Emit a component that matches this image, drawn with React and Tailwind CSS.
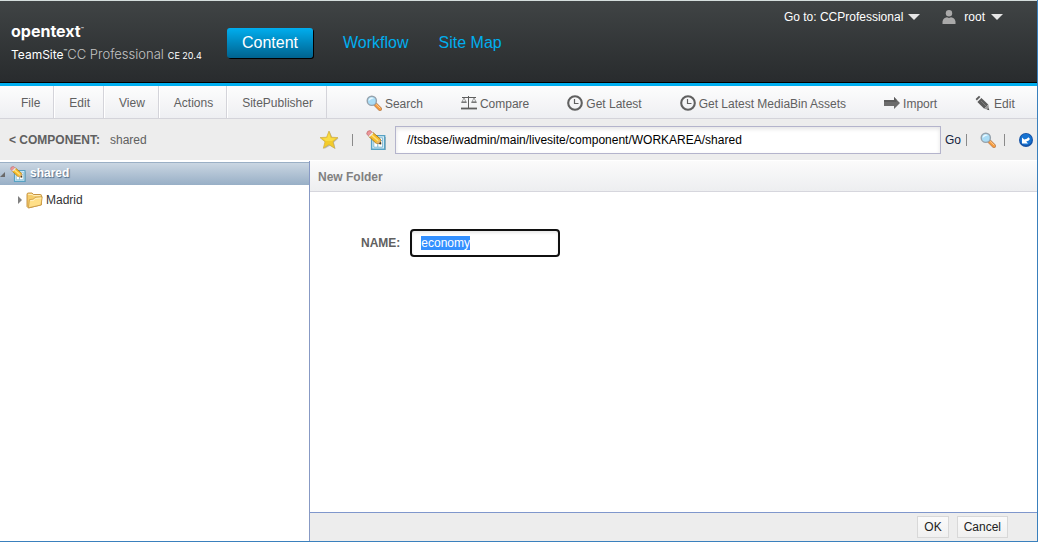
import { useEffect, useRef } from "react";

function MagnifierIcon() {
  return (
    <svg width="16" height="16" viewBox="0 0 16 16" aria-hidden="true">
      <path d="M9 9 14 14" stroke="#b98a63" strokeWidth="4" strokeLinecap="round" />
      <path d="M9.5 9.5 14 14" stroke="#f79a3c" strokeWidth="2.6" strokeLinecap="round" />
      <path d="M10.4 9.6 14 13" stroke="#ffd49a" strokeWidth="0.9" strokeLinecap="round" />
      <circle cx="5.8" cy="5.8" r="4.6" fill="#a9dcf6" stroke="#96a2ac" strokeWidth="1.4" />
      <path d="M2.6 6A3.3 3.3 0 0 1 8 3.2Q5 4 2.6 6Z" fill="#e8f8ff" />
    </svg>
  );
}

function ScalesIcon() {
  return (
    <svg width="16" height="16" viewBox="0 0 16 16" fill="none" stroke="#5f5f5f" aria-hidden="true">
      <path d="M1 2.5H15M7.5 1V13" strokeWidth="1" />
      <path d="M0 13.5H16" strokeWidth="1.8" />
      <path d="M3 3 1 6.8H5ZM13 3 11 6.8H15Z" strokeWidth="0.6" />
      <path d="M0.3 7.3H5.7M10.3 7.3H15.7" strokeWidth="1" />
    </svg>
  );
}

function ClockIcon() {
  return (
    <svg width="16" height="16" viewBox="0 0 16 16" fill="none" stroke="#606060" aria-hidden="true">
      <circle cx="8" cy="8" r="6.8" strokeWidth="2.1" />
      <path d="M7.5 4V8.5H11.5" strokeWidth="1.2" />
    </svg>
  );
}

function ArrowIcon() {
  return (
    <svg width="16" height="16" viewBox="0 0 16 16" aria-hidden="true">
      <path d="M0 5H10V2L16 8 10 14V11H0Z" fill="#6c6c6c" />
      <path d="M0 5H10V2L12.5 4.5V7H0Z" fill="#5c5c5c" />
    </svg>
  );
}

function PencilIcon() {
  return (
    <svg width="16" height="16" viewBox="0 0 16 16" aria-hidden="true">
      <path d="M4.4 5 11.2 11.6" stroke="#5c5c5c" strokeWidth="5.8" />
      <path d="M0.6 4 4 0.8 5.4 2 1.8 5.6Z" fill="#5c5c5c" />
      <path d="M13.4 9.6 9.2 13.8 14.2 15Z" fill="#989898" />
      <path d="M13.4 13.2 12 14.5 14.4 15.2Z" fill="#444" />
      <path d="M2.1 6.3 5.8 2.6" stroke="#d8d8d8" strokeWidth="0.6" />
      <path d="M6 6 11.6 11.6" stroke="#868686" strokeWidth="0.8" />
    </svg>
  );
}

function UserIcon() {
  return (
    <svg width="14" height="14" viewBox="0 0 14 14" fill="#a9a9a9" aria-hidden="true">
      <circle cx="7" cy="3.2" r="3.2" />
      <path d="M0.5 14V11.5Q1.3 7.6 5 7.2L7 8 9 7.2Q12.7 7.6 13.5 11.5V14Z" />
    </svg>
  );
}

function CaretIcon() {
  return (
    <svg width="12" height="6" viewBox="0 0 12 6" fill="#e6e6e6" aria-hidden="true">
      <path d="M0 0H12L6 6Z" />
    </svg>
  );
}

function StarIcon() {
  return (
    <svg width="20" height="20" viewBox="0 0 20 20" aria-hidden="true">
      <path d="M10.8 1.8 13.3 7.6 19.6 8.2 14.9 12.4 16.6 19 11 15.7 5.2 19 6.8 12.4 2 8.2 8.2 7.6Z" fill="#b9bcc0" />
      <path d="M10 1 12.4 7.2 19 7.6 14 11.8 15.7 18.3 10 14.7 4.3 18.3 6 11.8 1 7.6 7.6 7.2Z" fill="#f3cb2a" stroke="#cfae45" strokeWidth="0.7" />
      <path d="M10 2.8 11.6 8 16.6 8.4 13 11 7 11 3.6 8.4 8.2 8Z" fill="#f9dc45" />
    </svg>
  );
}

function PageEditIcon({ size }) {
  return (
    <svg width={size} height={size} viewBox="0 0 20 20" aria-hidden="true">
      <path d="M7 7H20V20.5H7Z" fill="#8d9296" opacity="0.6" />
      <path d="M5.6 5.6H18.7V19.2H5.6Z" fill="#d9eff8" stroke="#57a2c4" strokeWidth="1.4" />
      <path d="M7.8 7.8H16.6V17.2H7.8Z" fill="#fff" stroke="#76b4d0" strokeWidth="0.9" />
      <path d="M8.5 10.5H16M11.8 11V17" stroke="#76b4d0" strokeWidth="1" />
      <path d="M2.9 6.6 6.8 2.4 14.4 9 14.9 14 9.8 13Z" fill="#f6bd28" stroke="#a8741a" strokeWidth="0.9" />
      <path d="M5.6 5 12.4 11" stroke="#ffe07a" strokeWidth="1.6" />
      <path d="M9.8 13 14.4 9 14.9 14Z" fill="#e5b872" />
      <path d="M12.8 13.6 14.7 11.8 15.2 14.4Z" fill="#333" />
      <path d="M0.7 3.9Q0.7 0.6 4.2 0.5L6.2 2.3 2.6 6Z" fill="#ec9799" stroke="#be6668" strokeWidth="0.7" />
      <path d="M2.6 6 6.2 2.3 7.4 3.4 3.6 7Z" fill="#ececec" />
    </svg>
  );
}

function FolderIcon() {
  return (
    <svg width="17" height="17" viewBox="0 0 17 17" aria-hidden="true">
      <path d="M1 14.5V2.4Q1 1 2.4 1H6L7.6 2.5H14.4Q15.5 2.5 15.5 3.6V12.8L2.5 16Z" fill="#f6cd6c" stroke="#c18a35" strokeWidth="0.9" />
      <path d="M2.2 2.4H6L7.4 3.6H14.4" stroke="#fff0c2" strokeWidth="1" fill="none" />
      <path d="M2.4 15.8 3.4 7.6 7.4 7.2 9 5.4 16.3 4.8 15 13Z" fill="#ffdf88" stroke="#c99a45" strokeWidth="0.8" />
      <path d="M4.3 8.6 8 8.2 9.6 6.4 15 6" stroke="#fff3cb" strokeWidth="0.8" fill="none" />
    </svg>
  );
}

function BackBallIcon() {
  return (
    <svg width="14" height="14" viewBox="0 0 14 14" aria-hidden="true">
      <circle cx="7" cy="7" r="7" fill="#1552a5" />
      <circle cx="7" cy="6.5" r="5.8" fill="#1673d2" />
      <path d="M3 4.4V10.4H9L7.2 8.6Q9.8 8 11 6L9.4 4.2Q8.4 6 5.2 6.6Z" fill="#fff" />
    </svg>
  );
}

const menus = ["Edit", "View", "Actions", "SitePublisher"];

const tools = [
  ["Search", MagnifierIcon],
  ["Compare", ScalesIcon],
  ["Get Latest", ClockIcon],
  ["Get Latest MediaBin Assets", ClockIcon],
  ["Import", ArrowIcon],
  ["Edit", PencilIcon],
];

function Header() {
  return (
    <header className="flex h-[86px] shrink-0 items-start border-t border-b-3 border-t-[#d5dedd] border-b-[#00aeef] bg-linear-to-b from-[#404445] to-[#282b2d] shadow-[inset_0_-1px_0_#000]">
      <div className="w-[227px] shrink-0 pt-5 pl-[11px] font-['Inter',sans-serif] whitespace-nowrap text-white">
        <div className="flex items-start text-base leading-5 font-bold">
          opentext<span className="text-[5px] leading-4 font-normal">™</span>
        </div>
        <div className="flex items-baseline pt-[3px] text-[12px] leading-5">
          <span>TeamSite</span>
          <span className="self-start text-[6px] leading-4">™</span>
          <span className="pr-1 text-[13px] font-light text-[#c4c4c4]">CC Professional</span>
          <span className="text-[9px]">CE 20.4</span>
        </div>
      </div>
      <nav className="flex items-center gap-[30px] pt-[27px] text-base whitespace-nowrap">
        <a href="#content" className="rounded-[3px] bg-linear-to-b from-[#00aeef] to-[#00638f] px-[15px] py-[3px] text-white shadow-[1px_1px_0_#000]">
          Content
        </a>
        <a href="#workflow" className="text-[#00aeef]">Workflow</a>
        <a href="#sitemap" className="text-[#00aeef]">Site Map</a>
      </nav>
      <div className="ml-auto flex items-center pt-2 pr-[34px] text-xs whitespace-nowrap text-white">
        <button type="button" className="flex items-center gap-[5px]">
          Go to: CCProfessional <CaretIcon />
        </button>
        <button type="button" className="ml-[22px] flex items-center">
          <UserIcon />
          <span className="pr-[6px] pl-2">root</span>
          <CaretIcon />
        </button>
      </div>
    </header>
  );
}

function MenuBar() {
  return (
    <div className="flex h-[33px] shrink-0 border-b border-[#d4d4da] bg-linear-to-b from-[#fdfdfd] to-[#eeeff2] text-xs whitespace-nowrap text-[#606060]">
      <button type="button" className="border-r border-[#d4d4da] pt-0.5 pr-[13px] pl-[21px]">File</button>
      {menus.map((m) => (
        <button key={m} type="button" className="border-r border-[#d4d4da] pt-0.5 pr-[13px] pl-[15px] shadow-[inset_1px_0_0_#fff]">
          {m}
        </button>
      ))}
      <div className="flex gap-[38px] pl-[39px]">
        {tools.map(([label, Icon]) => (
          <button key={label} type="button" className="flex items-center gap-[3px] pt-px">
            <Icon />
            <span className="pt-0.5">{label}</span>
          </button>
        ))}
      </div>
    </div>
  );
}

function PathBar() {
  return (
    <div className="flex h-[42px] shrink-0 items-center border-b border-white bg-[#ededed] text-xs whitespace-nowrap text-[#606060]">
      <div className="flex w-[319px] shrink-0 gap-2.5 pl-[9px]">
        <a href="#component" className="font-bold">&lt; COMPONENT:</a>
        <span>shared</span>
      </div>
      <button type="button" aria-label="Favorites"><StarIcon /></button>
      <span className="ml-[13px] h-3 w-px bg-[#8a8a8a]" />
      <button type="button" aria-label="Edit page" className="mr-[9px] ml-[13px]"><PageEditIcon size={20} /></button>
      <input
        type="text"
        aria-label="Path"
        defaultValue="//tsbase/iwadmin/main/livesite/component/WORKAREA/shared"
        className="h-7 min-w-0 flex-1 border border-[#b4b4cc] bg-white px-[11px] text-black shadow-[inset_0_2px_4px_#e4e4e4] outline-none"
      />
      <button type="button" className="ml-1 text-[#14233f]">Go</button>
      <span className="ml-[5px] h-3 w-px bg-[#8a8a8a]" />
      <button type="button" aria-label="Find" className="ml-[13px]"><MagnifierIcon /></button>
      <span className="ml-2 h-3 w-px bg-[#8a8a8a]" />
      <button type="button" aria-label="Go back" className="mr-1 ml-[14px]"><BackBallIcon /></button>
    </div>
  );
}

function Tree() {
  return (
    <aside className="w-[310px] shrink-0 border-r border-[#8799c4] bg-white pt-px text-xs">
      <div className="flex h-[23px] items-center border-t border-[#9aafc5] bg-linear-to-b from-[#cad6e2] to-[#98afc6]">
        <svg width="5" height="5" viewBox="0 0 5 5" fill="#6a6a6a" aria-hidden="true"><path d="M5 0V5H0Z" /></svg>
        <span className="mr-1 ml-[5px]"><PageEditIcon size={16} /></span>
        <span className="pb-0.5 font-bold text-white [text-shadow:1px_1px_1px_#4f6c88]">shared</span>
      </div>
      <div className="flex h-[30px] items-center pl-[18px]">
        <svg width="4" height="8" viewBox="0 0 4 8" fill="#808080" aria-hidden="true"><path d="M0 0 4 4 0 8Z" /></svg>
        <span className="mr-[3px] ml-1"><FolderIcon /></span>
        <span className="text-[#333]">Madrid</span>
      </div>
    </aside>
  );
}

function NewFolder() {
  const nameRef = useRef(null);
  useEffect(() => {
    nameRef.current.focus();
    nameRef.current.select();
  }, []);
  return (
    <form className="flex min-w-0 flex-1 flex-col bg-white text-xs" onSubmit={(e) => e.preventDefault()}>
      <h1 className="flex h-[31px] items-center border-b border-[#d6d6dd] bg-linear-to-b from-[#fbfbfb] to-[#edeef0] pt-px pl-2 font-bold text-[#808080]">
        New Folder
      </h1>
      <div className="flex flex-1 items-start pt-[37px] pl-[51px]">
        <label htmlFor="folder-name" className="pr-[10px] leading-7 font-bold text-[#606060]">NAME:</label>
        <input
          id="folder-name"
          ref={nameRef}
          type="text"
          defaultValue="economy"
          className="h-7 w-[150px] rounded-[4px] border-2 border-[#101010] bg-white px-[9px] shadow-[inset_0_2px_3px_#e8e8e8] outline-none selection:bg-[#3390ff] selection:text-white"
        />
      </div>
      <div className="flex h-[29px] items-center justify-end gap-2 border-t border-[#7f97cc] bg-[#ededed] pr-[29px] text-[#222]">
        <button type="submit" className="h-[22px] border border-[#d8d8d8] bg-linear-to-b from-[#fafafa] to-[#f0f0f0] px-1.5">OK</button>
        <button type="button" className="h-[22px] border border-[#d8d8d8] bg-linear-to-b from-[#fafafa] to-[#f0f0f0] px-1.5">Cancel</button>
      </div>
    </form>
  );
}

export default function App() {
  return (
    <div className="flex min-h-screen flex-col border-r border-b border-[#3a80bd] bg-white font-['Liberation_Sans',Arial,sans-serif]">
      <Header />
      <MenuBar />
      <PathBar />
      <main className="flex flex-1">
        <Tree />
        <NewFolder />
      </main>
    </div>
  );
}
